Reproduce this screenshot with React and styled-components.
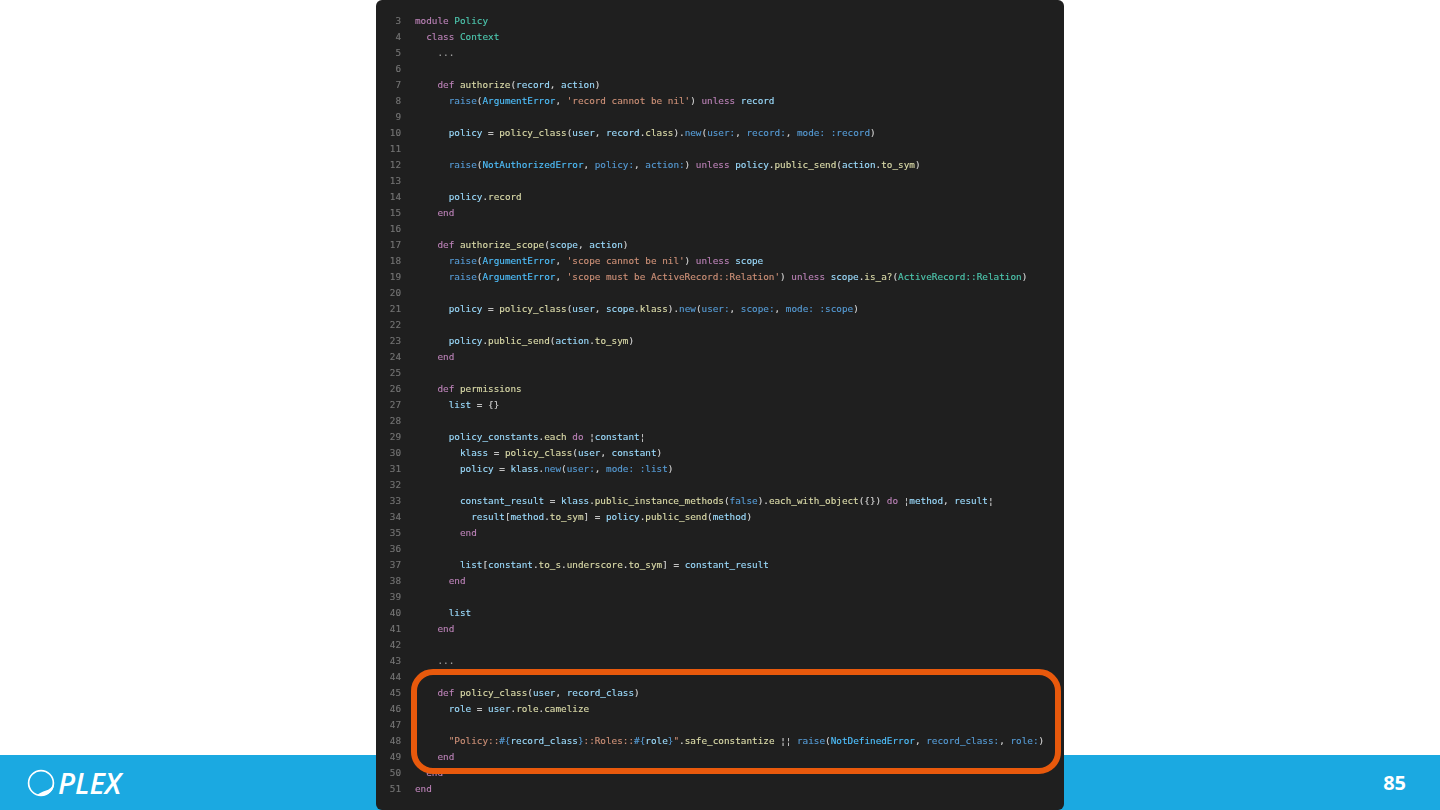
import styled, { createGlobalStyle } from "styled-components";

const GlobalStyle = createGlobalStyle`
  html, body {
    margin: 0;
    padding: 0;
    background: #fff;
    overflow: hidden;
  }
`;

const colors = {
  k: "#bb82b7",
  c: "#4ec9b0",
  f: "#dcdcaa",
  v: "#9cdcfe",
  s: "#ce9178",
  m: "#569cd6",
  e: "#4fc1ff",
  p: "#d4d4d4",
  g: "#a0a0a0",
};

const Slide = styled.div`
  position: relative;
  width: 1440px;
  height: 810px;
  display: flex;
  justify-content: center;
  background: #fff;
`;

const Footer = styled.footer`
  position: absolute;
  left: 0;
  right: 0;
  bottom: 0;
  height: 55px;
  padding: 0 34px 0 26px;
  display: flex;
  align-items: center;
  justify-content: space-between;
  background: #1ba9e1;
  color: #fff;
  font-family: "Open Sans", sans-serif;
`;

const Logo = styled.div`
  display: flex;
  align-items: center;
  gap: 2px;
`;

const LogoText = styled.span`
  font-size: 29px;
  line-height: 1;
  font-weight: 600;
  font-style: italic;
`;

const PageNumber = styled.span`
  font-size: 20px;
  font-weight: 700;
`;

const Panel = styled.div`
  position: relative;
  z-index: 1;
  width: 688px;
  height: 810px;
  box-sizing: border-box;
  padding-top: 13px;
  background: #1f1f1f;
  border-radius: 6px;
`;

const Code = styled.div`
  filter: blur(0.35px);
  font-family: "DejaVu Sans Mono", monospace;
  font-size: 9.34px;
  line-height: 16px;
  -webkit-text-stroke: 0.12px currentColor;
`;

const Line = styled.div`
  display: flex;
  height: 16px;
  white-space: pre;
`;

const LineNumber = styled.span`
  width: 25px;
  text-align: right;
  color: #757575;
`;

const LineBody = styled.span`
  margin-left: 14px;
`;

const Token = styled.span`
  color: ${(p) => colors[p.$kind]};
`;

const Highlight = styled.div`
  position: absolute;
  left: 35px;
  top: 669px;
  width: 650px;
  height: 105px;
  box-sizing: border-box;
  border: 6px solid #e8590c;
  border-radius: 22px;
`;

const source = [
  "k:module |c:Policy",
  "  |k:class |c:Context",
  "    |g:...",
  "",
  "    |k:def |f:authorize|p:(|v:record|p:, |v:action|p:)",
  "      |m:raise|p:(|e:ArgumentError|p:, |s:'record cannot be nil'|p:) |k:unless |v:record",
  "",
  "      |v:policy |p:= |f:policy_class|p:(|v:user|p:, |v:record|p:.|f:class|p:).|m:new|p:(|m:user:|p:, |m:record:|p:, |m:mode: :record|p:)",
  "",
  "      |m:raise|p:(|e:NotAuthorizedError|p:, |m:policy:|p:, |m:action:|p:) |k:unless |v:policy|p:.|f:public_send|p:(|v:action|p:.|f:to_sym|p:)",
  "",
  "      |v:policy|p:.|f:record",
  "    |k:end",
  "",
  "    |k:def |f:authorize_scope|p:(|v:scope|p:, |v:action|p:)",
  "      |m:raise|p:(|e:ArgumentError|p:, |s:'scope cannot be nil'|p:) |k:unless |v:scope",
  "      |m:raise|p:(|e:ArgumentError|p:, |s:'scope must be ActiveRecord::Relation'|p:) |k:unless |v:scope|p:.|f:is_a?|p:(|c:ActiveRecord::Relation|p:)",
  "",
  "      |v:policy |p:= |f:policy_class|p:(|v:user|p:, |v:scope|p:.|f:klass|p:).|m:new|p:(|m:user:|p:, |m:scope:|p:, |m:mode: :scope|p:)",
  "",
  "      |v:policy|p:.|f:public_send|p:(|v:action|p:.|f:to_sym|p:)",
  "    |k:end",
  "",
  "    |k:def |f:permissions",
  "      |v:list |p:= {}",
  "",
  "      |v:policy_constants|p:.|f:each |k:do |p:¦|v:constant|p:¦",
  "        |v:klass |p:= |f:policy_class|p:(|v:user|p:, |v:constant|p:)",
  "        |v:policy |p:= |v:klass|p:.|m:new|p:(|m:user:|p:, |m:mode: :list|p:)",
  "",
  "        |v:constant_result |p:= |v:klass|p:.|f:public_instance_methods|p:(|m:false|p:).|f:each_with_object|p:({}) |k:do |p:¦|v:method|p:, |v:result|p:¦",
  "          |v:result|p:[|v:method|p:.|f:to_sym|p:] = |v:policy|p:.|f:public_send|p:(|v:method|p:)",
  "        |k:end",
  "",
  "        |v:list|p:[|v:constant|p:.|f:to_s|p:.|f:underscore|p:.|f:to_sym|p:] = |v:constant_result",
  "      |k:end",
  "",
  "      |v:list",
  "    |k:end",
  "",
  "    |g:...",
  "",
  "    |k:def |f:policy_class|p:(|v:user|p:, |v:record_class|p:)",
  "      |v:role |p:= |v:user|p:.|f:role|p:.|f:camelize",
  "",
  "      |s:\"Policy::|m:#{|v:record_class|m:}|s:::Roles::|m:#{|v:role|m:}|s:\"|p:.|f:safe_constantize |p:¦¦ |m:raise|p:(|e:NotDefinedError|p:, |m:record_class:|p:, |m:role:|p:)",
  "    |k:end",
  "  |k:end",
  "|k:end",
];

function parse(text) {
  return text.split("|").map((part) => {
    const at = part.indexOf(":");
    const spaces = /^ +$/.test(part);
    if (spaces) return { kind: "p", text: part };
    return { kind: part.slice(0, at), text: part.slice(at + 1) };
  });
}

function PlexMark() {
  return (
    <svg width="30" height="28" viewBox="0 0 30 28">
      <circle cx="15" cy="14" r="12.4" fill="none" stroke="#fff" strokeWidth="1.7" />
      <path d="M28 13.4C26.8 18 23.4 20.4 19.4 21.8 16.4 22.8 13.8 24 11.4 25.8 16.6 27.4 22.4 26.2 25.6 21.8 27.4 19.4 28.2 16 28 13.4Z" fill="#fff" />
    </svg>
  );
}

function App() {
  return (
    <Slide>
      <GlobalStyle />
      <Footer>
        <Logo>
          <PlexMark />
          <LogoText>PLEX</LogoText>
        </Logo>
        <PageNumber>85</PageNumber>
      </Footer>
      <Panel>
        <Code>
          {source.map((text, i) => (
            <Line key={i}>
              <LineNumber>{i + 3}</LineNumber>
              <LineBody>
                {text &&
                  parse(text).map((t, j) => (
                    <Token key={j} $kind={t.kind}>
                      {t.text}
                    </Token>
                  ))}
              </LineBody>
            </Line>
          ))}
        </Code>
        <Highlight />
      </Panel>
    </Slide>
  );
}

export default App;
